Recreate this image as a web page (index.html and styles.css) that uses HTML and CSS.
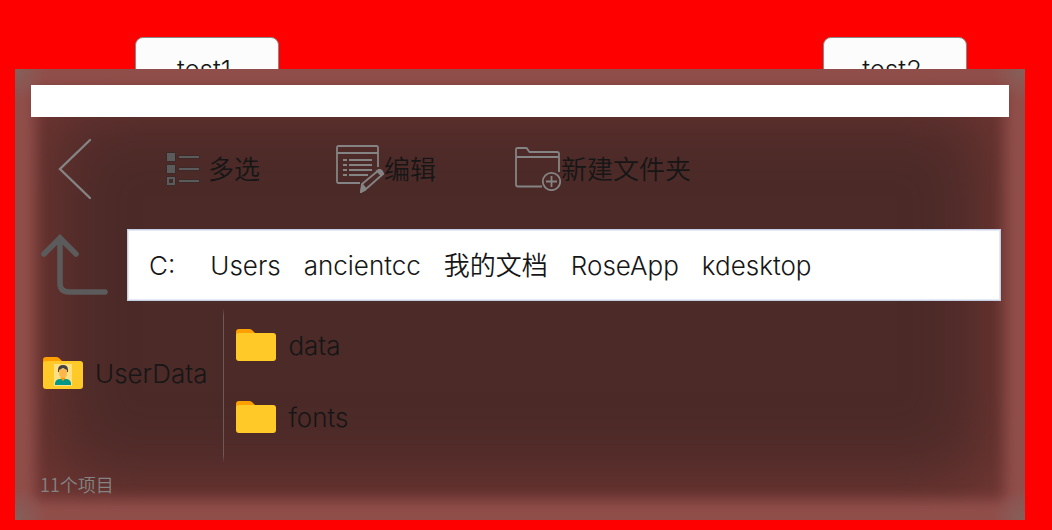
FILE: index.html
```
<!DOCTYPE html>
<html lang="zh-CN">
<head>
    <meta charset="UTF-8">
    <meta name="viewport" content="width=device-width, initial-scale=1.0">
    <title>kdesktop</title>
    <link rel="stylesheet" href="styles.css">
</head>
<body>
    <div class="test-buttons">
        <button class="test-btn" type="button">test1</button>
        <button class="test-btn" type="button">test2</button>
    </div>

    <!-- File browser dialog -->
    <div class="dialog" role="dialog" aria-label="kdesktop">
        <div class="title-bar"></div>

        <div class="toolbar">
            <button class="tool back-btn" type="button" aria-label="返回">
                <svg width="34" height="62" viewBox="0 0 34 62" fill="none" stroke="#848484" stroke-width="2.4" stroke-linecap="round">
                    <path d="M32 2 2 31l30 29"/>
                </svg>
            </button>
            <button class="tool select-btn" type="button">
                <svg width="42" height="34" viewBox="0 0 42 34">
                    <g fill="#5b5b5b" stroke="#3d2928" stroke-width="1">
                        <path d="M.5.5h9v9h-9zM.5 12.500h9v9h-9z"/>
                        <path d="M.5 24.500h9v9h-9zM3.500 27.500v3h3v-3z" fill-rule="evenodd"/>
                        <path d="M12.500 3.500h21v3h-21zM12.500 15.500h21v3h-21zM12.500 27.500h21v3h-21z"/>
                    </g>
                </svg>
                <span>多选</span>
            </button>
            <button class="tool edit-btn" type="button">
                <svg width="48" height="48" viewBox="0 0 48 48" fill="none" stroke="#848484" stroke-width="1.800">
                    <path d="M24 38H2.500Q1 38 1 36.500v-34Q1 1 2.500 1h38Q42 1 42 2.500V22M1 8h41"/>
                    <path d="M7 15h4M7 20h4M7 25h4M7 30h4M13 15h23M13 20h23M13 25h23M13 30h19"/>
                    <path d="m26 39 17-14q3 0 4 4L30 44l-5 3zM30 44l-4-5" stroke-linejoin="round"/>
                    <path d="m25 47 1-6 3 4zM41 26l2-1q3 0 4 4l-2 1z" fill="#848484"/>
                </svg>
                <span>编辑</span>
            </button>
            <button class="tool folder-btn" type="button">
                <svg width="46" height="44" viewBox="0 0 46 44" fill="none" stroke="#848484" stroke-width="1.800">
                    <path d="M27 39.500H3Q1 39.500 1 37.500v-35Q1 1 2.500 1H11q1 0 2 2l1.500 2H42q2 0 2 2v18M1 10h43"/>
                    <circle cx="36.500" cy="34.500" r="8.700"/>
                    <path d="M36.500 29v11M31 34.500h11"/>
                </svg>
                <span>新建文件夹</span>
            </button>
        </div>

        <div class="path-row">
            <button class="up-btn" type="button" aria-label="上一级">
                <svg width="68" height="64" viewBox="0 0 68 64" fill="none" stroke="#5b5b5b" stroke-width="5.500" stroke-linecap="round">
                    <path d="M19 5v45q0 9 9 9h36M3 21 19 5l16 16"/>
                </svg>
            </button>
            <nav class="path">
                <a class="drive" href="#">C:</a>
                <a href="#">Users</a>
                <a href="#">ancientcc</a>
                <a href="#">我的文档</a>
                <a href="#">RoseApp</a>
                <a href="#">kdesktop</a>
            </nav>
        </div>

        <div class="content">
            <div class="places">
                <a class="item" href="#">
                    <svg width="40" height="32" viewBox="0 0 40 32">
                        <path d="M0 12V3q0-3 3-3h10q2 0 3 1l3 3v8z" fill="#ffa000"/>
                        <rect y="4" width="40" height="28" rx="3" fill="#ffca28"/>
                        <path d="M11 7h18v22H11z" fill="#ffe082"/>
                        <path d="M12 28v-2q1-4 5-4h6q4 0 5 4v2z" fill="#009688"/>
                        <path d="M18 19h4v3l-2 2-2-2z" fill="#ff9800"/>
                        <path d="M16 12h8v4q0 5-4 5t-4-5z" fill="#ffb74d"/>
                        <path d="M15 15v-2q0-5 5-5t5 5v2h-1v-2l-4-2-4 2v2z" fill="#424242"/>
                    </svg>
                    <span>UserData</span>
                </a>
            </div>
            <div class="files">
                <a class="item" href="#">
                    <svg width="40" height="32" viewBox="0 0 40 32">
                        <path d="M0 12V3q0-3 3-3h10q2 0 3 1l3 3v8z" fill="#ffa000"/>
                        <rect y="4" width="40" height="28" rx="3" fill="#ffca28"/>
                    </svg>
                    <span>data</span>
                </a>
                <a class="item" href="#">
                    <svg width="40" height="32" viewBox="0 0 40 32">
                        <path d="M0 12V3q0-3 3-3h10q2 0 3 1l3 3v8z" fill="#ffa000"/>
                        <rect y="4" width="40" height="28" rx="3" fill="#ffca28"/>
                    </svg>
                    <span>fonts</span>
                </a>
            </div>
        </div>

        <div class="status">11个项目</div>
    </div>
</body>
</html>
```
FILE: styles.css
```
* {
    box-sizing: border-box;
}

body {
    margin: 0;
    min-height: 100vh;
    background-color: #ff0000;
    font-family: Inter, "Noto Sans CJK SC", sans-serif;
    font-size: 26px;
    font-weight: 350;
    line-height: 32px;
    color: #161616;
}

button {
    font: inherit;
    color: inherit;
    background: none;
    border: none;
    padding: 0;
    cursor: pointer;
}

a {
    color: inherit;
    text-decoration: none;
}

svg {
    display: block;
    flex: none;
}

.test-buttons {
    display: flex;
    justify-content: space-between;
    padding: 37px 85px 0 135px;
}

.test-btn {
    width: 144px;
    height: 64px;
    padding-top: 2px;
    padding-right: 6px;
    background-color: #fcfcfc;
    border: 1px solid #888;
    border-radius: 8px;
}

/* The dialog lies over the test buttons */
.dialog {
    position: absolute;
    top: 69px;
    right: 27px;
    bottom: 10px;
    left: 15px;
    display: flex;
    flex-direction: column;
    padding: 16px;
    background-color: #4b2a28;
    box-shadow: inset 0 0 14px 20px #914f4b, inset 0 0 80px 32px #773935;
}

.dialog::before {
    content: "";
    position: absolute;
    inset: 0;
    pointer-events: none;
    background:
        radial-gradient(circle at top left, #85605b, transparent 32px),
        radial-gradient(circle at top right, #85605b, transparent 32px),
        radial-gradient(circle at bottom left, #85605b, transparent 32px),
        radial-gradient(circle at bottom right, #85605b, transparent 32px);
}

.title-bar {
    position: relative;
    height: 32px;
    background-color: #fff;
}

.toolbar {
    display: flex;
    align-items: center;
    height: 112px;
    padding: 0 27px 8px;
}

.tool {
    display: flex;
    align-items: center;
}

.tool span {
    padding-top: 2px;
}

.select-btn {
    margin-left: 74px;
}

.edit-btn {
    margin-left: 76px;
}

.folder-btn {
    margin-left: 79px;
}

.path-row {
    display: flex;
    align-items: center;
    gap: 18px;
    padding: 0 8px 0 10px;
}

.path {
    flex: 1;
    display: flex;
    align-items: center;
    gap: 23px;
    height: 72px;
    padding: 2px 21px 0;
    background-color: #fff;
    border: 1px solid #c5cfe5;
    box-shadow: inset 0 0 0 1px #e6eaf4;
}

.drive {
    margin-right: 12px;
}

.content {
    flex: 1;
    display: flex;
    padding: 8px 12px;
}

.places {
    display: flex;
    align-items: center;
    padding-right: 16px;
    padding-bottom: 26px;
    border-right: 1px solid;
    border-image: linear-gradient(transparent, #6a5a58 8px, #6a5a58 calc(100% - 8px), transparent) 1;
}

.files {
    flex: 1;
    display: flex;
    flex-direction: column;
    padding-left: 12px;
}

.item {
    display: flex;
    align-items: center;
    gap: 12px;
    height: 72px;
}

.item span {
    padding-top: 2px;
}

.status {
    padding: 0 9px 6px;
    font-family: "Noto Sans CJK SC", sans-serif;
    font-size: 18px;
    line-height: 28px;
    color: #848484;
}
```
